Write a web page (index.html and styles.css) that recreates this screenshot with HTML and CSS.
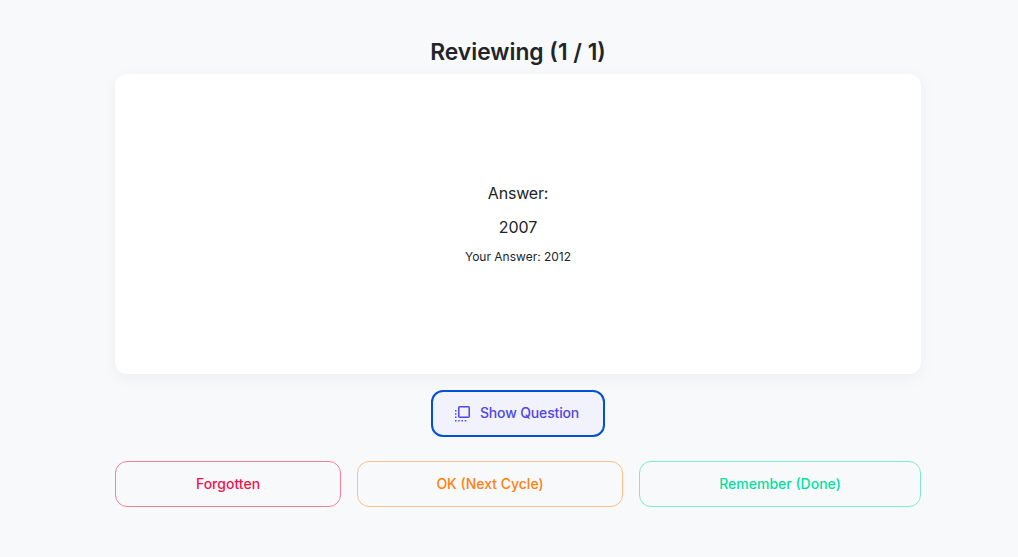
FILE: index.html
```html
<!DOCTYPE html>
<html lang="en">
<head>
	<meta charset="UTF-8">
	<title>Review</title>
	<link rel="stylesheet" href="styles.css">
</head>
<body>
	<main class="review">
		<h1 class="review-title">Reviewing (1 / 1)</h1>

		<section class="card">
			<p class="card-label">Answer:</p>
			<p class="card-answer">2007</p>
			<p class="card-yours">Your Answer: 2012</p>
		</section>

		<button class="button-flip" type="button">
			<svg class="flip-icon" width="16" height="16" viewBox="0 0 16 16" fill="none" stroke="currentColor" stroke-width="1.5">
				<rect x="4.75" y="0.75" width="10.5" height="10.5" rx="1"/>
				<path d="M1 4h1.5v1.5H1zM1 7.25h1.5v1.5H1zM1 10.5h1.5v1.5H1zM1 14h1.5v1.5H1zM4.25 14h1.5v1.5h-1.5zM7.5 14h1.5v1.5H7.5zM10.75 14h1.5v1.5h-1.5z" fill="currentColor" stroke="none"/>
			</svg>
			<span class="flip-text">Show Question</span>
		</button>

		<div class="grades">
			<button class="grade grade-forgotten" type="button">Forgotten</button>
			<button class="grade grade-ok" type="button">OK (Next Cycle)</button>
			<button class="grade grade-done" type="button">Remember (Done)</button>
		</div>
	</main>
</body>
</html>
```

FILE: styles.css
```css
* {
	box-sizing: border-box;
}

body {
	margin: 0;
	height: 557px;
	overflow: hidden;
	background-color: #f8f9fb;
	color: #212529;
	font-family: Inter, "Liberation Sans", sans-serif;
}

.review {
	width: 806px;
	margin-left: 115px;
	padding-top: 36px;
	display: flex;
	flex-direction: column;
	align-items: center;
}

.review-title {
	margin: 0 0 7px;
	font-size: 22.8px;
	line-height: 31px;
	font-weight: 600;
}

.card {
	width: 100%;
	height: 300px;
	padding-bottom: 1px;
	margin-bottom: 16px;
	display: flex;
	flex-direction: column;
	align-items: center;
	justify-content: center;
	background-color: #fff;
	border-radius: 12px;
	box-shadow: 0 4px 16px rgba(0, 0, 0, 0.05);
}

.card p {
	margin: 0;
}

.card-label {
	font-size: 16px;
	line-height: 24px;
	letter-spacing: -0.2px;
}

.card-answer {
	padding-top: 10px;
	font-size: 16px;
	line-height: 24px;
}

.card-yours {
	padding-top: 9px;
	font-size: 12px;
	line-height: 18px;
}

.button-flip {
	width: 174px;
	height: 47px;
	margin-bottom: 24px;
	padding-right: 9px;
	display: flex;
	align-items: center;
	justify-content: center;
	gap: 10px;
	background-color: #f1f2fb;
	border: 2px solid #0050d8;
	border-radius: 12px;
	color: #4f46e5;
	font-family: inherit;
	font-size: 14px;
	font-weight: 500;
}

.flip-icon {
	flex: none;
}

.flip-text {
	margin-bottom: 3px;
	letter-spacing: -0.15px;
}

.grades {
	width: 100%;
	display: flex;
	gap: 16px;
}

.grade {
	height: 46px;
	padding-bottom: 2px;
	background-color: transparent;
	border: 1px solid;
	border-radius: 12px;
	font-family: inherit;
	font-size: 14px;
	font-weight: 500;
}

.grade-forgotten {
	width: 226px;
	border-color: #fb7f95;
	color: #f0134d;
}

.grade-ok {
	width: 266px;
	border-color: #ffbe85;
	color: #ff7f0e;
}

.grade-done {
	width: 282px;
	border-color: #7eeccb;
	color: #06dfa0;
}
```
